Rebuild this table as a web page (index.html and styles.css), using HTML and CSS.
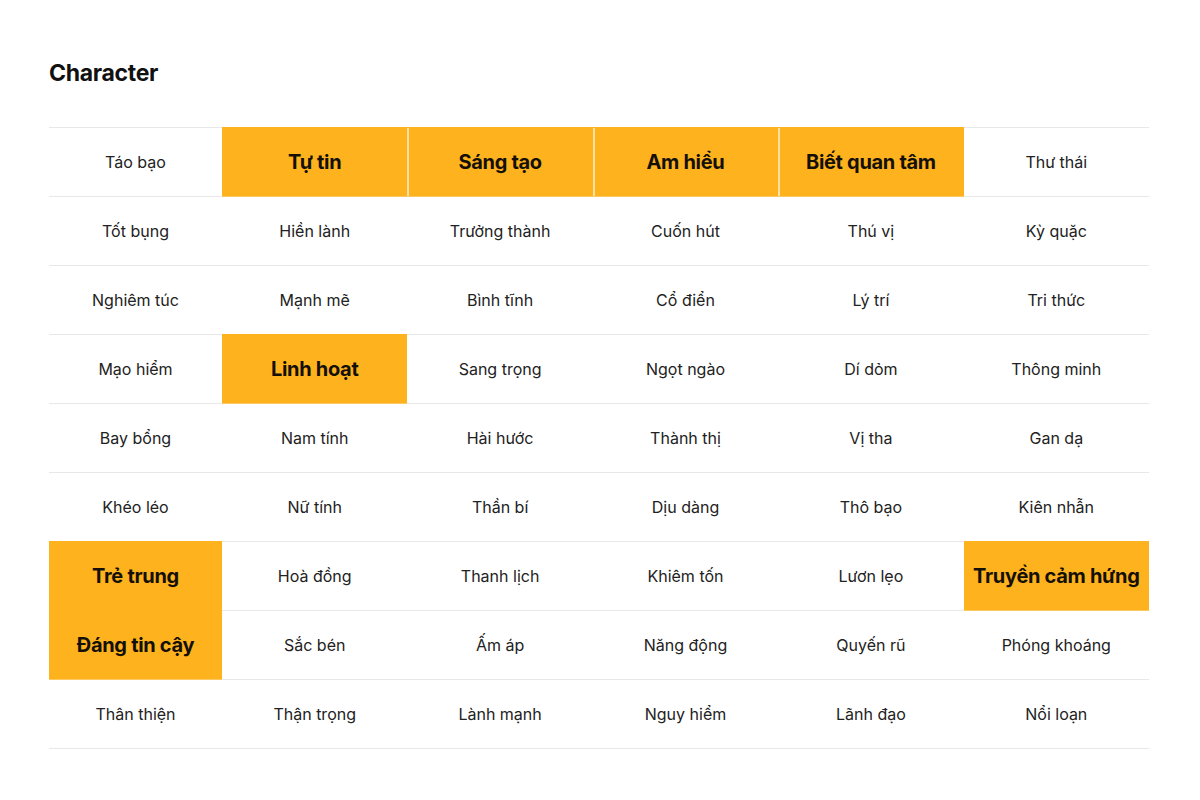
FILE: index.html
```html
<!DOCTYPE html>
<html lang="vi">
<head>
<meta charset="utf-8">
<title>Character</title>
<link rel="stylesheet" href="styles.css">
</head>
<body>
<main class="page">
  <h1 class="title">Character</h1>
  <div class="grid">
    <div class="cell">Táo bạo</div>
    <div class="cell hl">Tự tin</div>
    <div class="cell hl joined">Sáng tạo</div>
    <div class="cell hl joined">Am hiểu</div>
    <div class="cell hl joined">Biết quan tâm</div>
    <div class="cell">Thư thái</div>

    <div class="cell">Tốt bụng</div>
    <div class="cell">Hiền lành</div>
    <div class="cell">Trưởng thành</div>
    <div class="cell">Cuốn hút</div>
    <div class="cell">Thú vị</div>
    <div class="cell">Kỳ quặc</div>

    <div class="cell">Nghiêm túc</div>
    <div class="cell">Mạnh mẽ</div>
    <div class="cell">Bình tĩnh</div>
    <div class="cell">Cổ điển</div>
    <div class="cell">Lý trí</div>
    <div class="cell">Tri thức</div>

    <div class="cell">Mạo hiểm</div>
    <div class="cell hl">Linh hoạt</div>
    <div class="cell">Sang trọng</div>
    <div class="cell">Ngọt ngào</div>
    <div class="cell">Dí dỏm</div>
    <div class="cell">Thông minh</div>

    <div class="cell">Bay bổng</div>
    <div class="cell">Nam tính</div>
    <div class="cell">Hài hước</div>
    <div class="cell">Thành thị</div>
    <div class="cell">Vị tha</div>
    <div class="cell">Gan dạ</div>

    <div class="cell">Khéo léo</div>
    <div class="cell">Nữ tính</div>
    <div class="cell">Thần bí</div>
    <div class="cell">Dịu dàng</div>
    <div class="cell">Thô bạo</div>
    <div class="cell">Kiên nhẫn</div>

    <div class="cell hl">Trẻ trung</div>
    <div class="cell">Hoà đồng</div>
    <div class="cell">Thanh lịch</div>
    <div class="cell">Khiêm tốn</div>
    <div class="cell">Lươn lẹo</div>
    <div class="cell hl">Truyền cảm hứng</div>

    <div class="cell hl">Đáng tin cậy</div>
    <div class="cell">Sắc bén</div>
    <div class="cell">Ấm áp</div>
    <div class="cell">Năng động</div>
    <div class="cell">Quyến rũ</div>
    <div class="cell">Phóng khoáng</div>

    <div class="cell">Thân thiện</div>
    <div class="cell">Thận trọng</div>
    <div class="cell">Lành mạnh</div>
    <div class="cell">Nguy hiểm</div>
    <div class="cell">Lãnh đạo</div>
    <div class="cell">Nổi loạn</div>
  </div>
</main>
</body>
</html>
```

FILE: styles.css
```css
html, body {
  margin: 0;
  padding: 0;
  background: #ffffff;
}

body {
  font-family: Inter, "Noto Sans", "Liberation Sans", sans-serif;
  color: #1a1a1a;
}

.page {
  padding: 59px 51px 0 49px;
}

.title {
  margin: 0 0 40px 0;
  font-size: 23px;
  line-height: 28px;
  font-weight: 700;
  letter-spacing: -0.3px;
  color: #111111;
}

.grid {
  display: grid;
  grid-template-columns: 173px repeat(5, 1fr);
  width: 1100px;
  border-top: 1px solid #e8e8e8;
}

.cell {
  height: 68px;
  display: flex;
  align-items: center;
  justify-content: center;
  border-bottom: 1px solid #e8e8e8;
  font-size: 16px;
  font-weight: 400;
  color: #222222;
  white-space: nowrap;
}

.hl {
  background: #fdb21e;
  border-bottom-color: #fcc862;
  font-size: 20px;
  font-weight: 700;
  letter-spacing: -0.3px;
  color: #141008;
  box-shadow: 0 -1px 0 #fdb21e;
}

.joined {
  box-shadow: 0 -1px 0 #fdb21e, inset 2px 0 0 #fbe1a4;
}
```
